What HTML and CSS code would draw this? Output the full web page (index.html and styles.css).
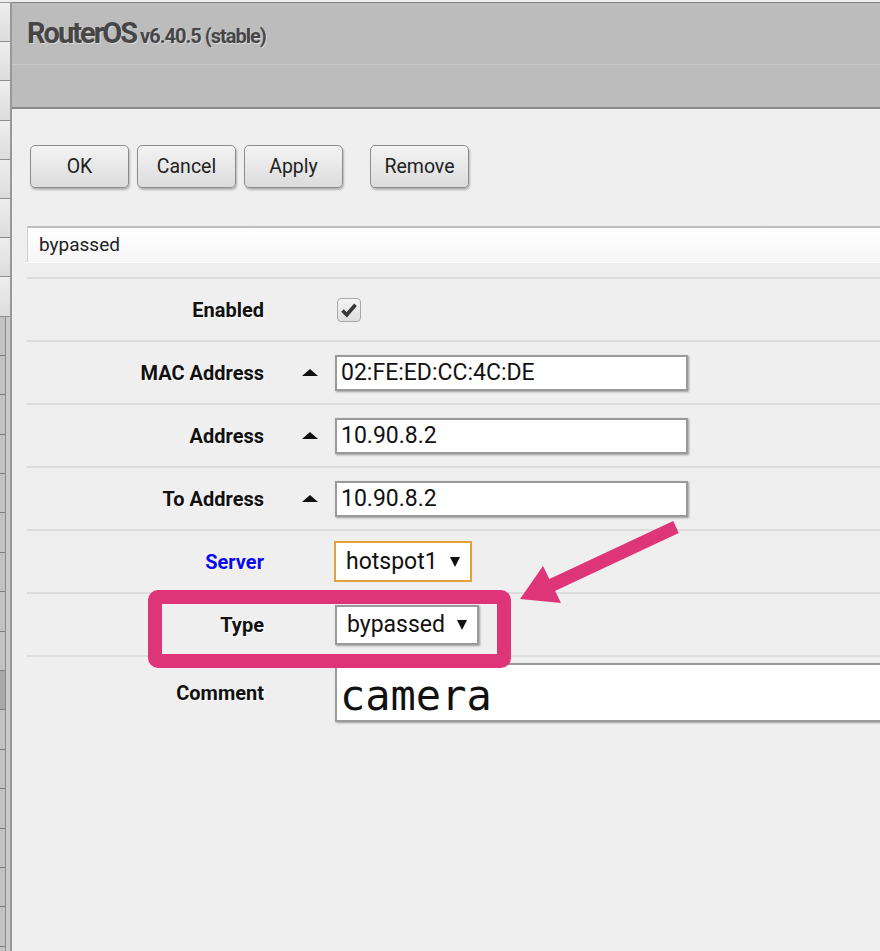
FILE: index.html
```html
<!DOCTYPE html>
<html lang="en">
<head>
  <meta charset="UTF-8" />
  <meta name="viewport" content="width=device-width, initial-scale=1.0"/>
  <title>RouterOS</title>

  <link rel="stylesheet" href="styles.css">
</head>
<body>
  <div class="tabs">
    <div class="tabs-top">
      <div class="tab"></div>
      <div class="tab"></div>
      <div class="tab"></div>
      <div class="tab"></div>
      <div class="tab"></div>
      <div class="tab"></div>
      <div class="tab"></div>
      <div class="tab"></div>
    </div>
    <div class="tabs-bottom">
      <div class="tab-list">
        <div class="tab"></div>
        <div class="tab"></div>
        <div class="tab"></div>
        <div class="tab"></div>
        <div class="tab"></div>
        <div class="tab"></div>
        <div class="tab"></div>
        <div class="tab"></div>
        <div class="tab"></div>
        <div class="tab active"></div>
        <div class="tab"></div>
        <div class="tab"></div>
        <div class="tab"></div>
        <div class="tab"></div>
        <div class="tab"></div>
        <div class="tab"></div>
        <div class="tab"></div>
      </div>
      <div class="tab-fill"></div>
    </div>
  </div>

  <div class="window">
    <div class="titlebar">
      <div class="title-row">
        <h1 class="title">RouterOS<small> v6.40.5 (stable)</small></h1>
      </div>
      <div class="title-sub"></div>
    </div>

    <div class="content">
      <div class="actions">
        <button class="btn">OK</button>
        <button class="btn">Cancel</button>
        <button class="btn">Apply</button>
        <button class="btn remove">Remove</button>
      </div>

      <div class="name-bar">
        <div class="name">bypassed</div>
      </div>

      <div class="form">
        <div class="row">
          <label>Enabled</label>
          <span></span>
          <div class="field">
            <span class="check">
              <svg width="18" height="18" viewBox="0 0 18 18"><path d="M2.5 9.5 L6.8 13.8 L15.5 3.8" fill="none" stroke="#383838" stroke-width="3.6"/></svg>
            </span>
          </div>
        </div>
        <div class="row">
          <label>MAC Address</label>
          <span class="up"></span>
          <div class="field"><div class="input">02:FE:ED:CC:4C:DE</div></div>
        </div>
        <div class="row">
          <label>Address</label>
          <span class="up"></span>
          <div class="field"><div class="input">10.90.8.2</div></div>
        </div>
        <div class="row">
          <label>To Address</label>
          <span class="up"></span>
          <div class="field"><div class="input">10.90.8.2</div></div>
        </div>
        <div class="row">
          <label class="link">Server</label>
          <span></span>
          <div class="field"><div class="select focus">hotspot1<span class="caret"></span></div></div>
        </div>
        <div class="row">
          <label>Type</label>
          <span></span>
          <div class="field"><div class="select">bypassed<span class="caret"></span></div></div>
        </div>
        <div class="row comment">
          <label>Comment</label>
          <span></span>
          <div class="field"><div class="input mono">camera</div></div>
        </div>
      </div>
    </div>
  </div>

  <!-- pink markup drawn on top of the form -->
  <svg class="markup" width="880" height="951" viewBox="0 0 880 951">
    <rect x="155" y="597" width="349" height="64" rx="3" fill="none" stroke="#dd3577" stroke-width="14"/>
    <line x1="676" y1="527" x2="550" y2="586" stroke="#dd3577" stroke-width="13"/>
    <polygon points="520,599 543,566 561,603" fill="#dd3577"/>
  </svg>
</body>
</html>
```

FILE: styles.css
```css
* {
  box-sizing: border-box;
  margin: 0;
  padding: 0;
}

body {
  display: flex;
  height: 100vh;
  overflow: hidden;
  padding-top: 2px;
  background-color: #efefef;
  font-family: Roboto, 'Liberation Sans', sans-serif;
  color: #111;
}

/* left tab strip */
.tabs {
  width: 12px;
  flex: none;
  display: flex;
  flex-direction: column;
  border-right: 2px solid #989898;
}

.tabs-top {
  border-top: 1px solid #999;
}

.tabs-top .tab {
  height: 39.2px;
  background: linear-gradient(#eeeeee, #dcdcdc);
  border-bottom: 1px solid #8e8e8e;
}

.tabs-bottom {
  flex: 1;
  display: flex;
}

.tab-list {
  width: 6px;
  border-right: 1px solid #8a8a8a;
}

.tab-list .tab {
  height: 39.4px;
  background-color: #c3c3c3;
  border-bottom: 1px solid #7c7c7c;
}

.tab-list .tab.active {
  background-color: #a9a9a9;
}

.tab-fill {
  flex: 1;
  background-color: #cbcbcb;
}

/* window */
.window {
  flex: 1;
  min-width: 0;
  display: flex;
  flex-direction: column;
  overflow: hidden;
}

.titlebar {
  background-color: #bcbcbc;
  border-top: 1px solid #828282;
  border-bottom: 2px solid #8a8a8a;
}

.title-row {
  height: 62px;
  display: flex;
  align-items: center;
  padding-left: 15px;
  padding-bottom: 2px;
  border-bottom: 1px solid #c8c8c8;
}

.title {
  font-size: 29px;
  font-weight: 700;
  letter-spacing: -2px;
  color: #464646;
  text-shadow: 1px 1px 0 #d8d8d8;
}

.title small {
  font-size: 20px;
  letter-spacing: -1px;
}

.title-sub {
  height: 42px;
}

.content {
  width: 1000px;
  padding: 36px 0 0 15px;
}

.actions {
  display: flex;
  gap: 8px;
  margin-left: 3px;
}

.btn {
  width: 99px;
  height: 43px;
  font-family: inherit;
  font-size: 19.5px;
  color: #222;
  border: 1px solid #8c8c8c;
  border-radius: 5px;
  background: linear-gradient(#f3f3f3, #dcdcdc);
  box-shadow: 1px 2px 2px rgba(0, 0, 0, 0.25);
  cursor: pointer;
}

.btn.remove {
  margin-left: 19px;
}

.name-bar {
  height: 53px;
  margin-top: 38px;
  border-bottom: 2px solid #dcdcdc;
}

.name {
  height: 36px;
  padding-left: 11px;
  line-height: 33px;
  font-size: 19px;
  color: #222;
  border-top: 2px solid #bdbdbd;
  border-left: 1px solid #cfcfcf;
  background: linear-gradient(#ffffff, #f6f6f6);
  box-shadow: 0 1px 0 #fff;
}

/* form rows */
.row {
  display: grid;
  grid-template-columns: 237px 71px 1fr;
  align-items: center;
  height: 63px;
  border-bottom: 2px solid #dcdcdc;
}

.row label {
  text-align: right;
  font-size: 20px;
  font-weight: 700;
  color: #111;
  text-shadow: 1px 1px 0 #fff;
}

.row label.link {
  color: #0a0af0;
}

.row.comment {
  height: 71px;
  border-bottom: none;
}

.up {
  justify-self: end;
  margin-right: 17px;
  width: 0;
  height: 0;
  border-left: 8px solid transparent;
  border-right: 8px solid transparent;
  border-bottom: 7px solid #111;
}

.field {
  display: flex;
  align-items: center;
}

.check {
  width: 24px;
  height: 24px;
  margin-left: 2px;
  display: flex;
  align-items: center;
  justify-content: center;
  border: 1px solid #a8a8a8;
  border-radius: 4px;
  background: linear-gradient(#f4f4f4, #dddddd);
}

.input {
  width: 353px;
  height: 36px;
  padding-left: 4px;
  line-height: 32px;
  font-size: 23px;
  background-color: #fff;
  border: 2px solid #9a9a9a;
  box-shadow: 1px 1px 2px rgba(0, 0, 0, 0.35);
}

.input.mono {
  width: 600px;
  height: 59px;
  padding-left: 3px;
  line-height: 62px;
  font-family: 'DejaVu Sans Mono', monospace;
  font-size: 42px;
}

.select {
  display: inline-flex;
  align-items: center;
  gap: 12px;
  height: 40px;
  padding: 0 10px;
  font-size: 23px;
  background-color: #fff;
  border: 2px solid #9a9a9a;
  box-shadow: 1px 1px 2px rgba(0, 0, 0, 0.35);
}

.select.focus {
  height: 41px;
  margin-left: -1px;
  border-color: #e3a13b;
  box-shadow: none;
}

.caret {
  width: 0;
  height: 0;
  border-left: 5px solid transparent;
  border-right: 5px solid transparent;
  border-top: 10px solid #111;
}

.markup {
  position: absolute;
  top: 0;
  left: 0;
  pointer-events: none;
}
```
